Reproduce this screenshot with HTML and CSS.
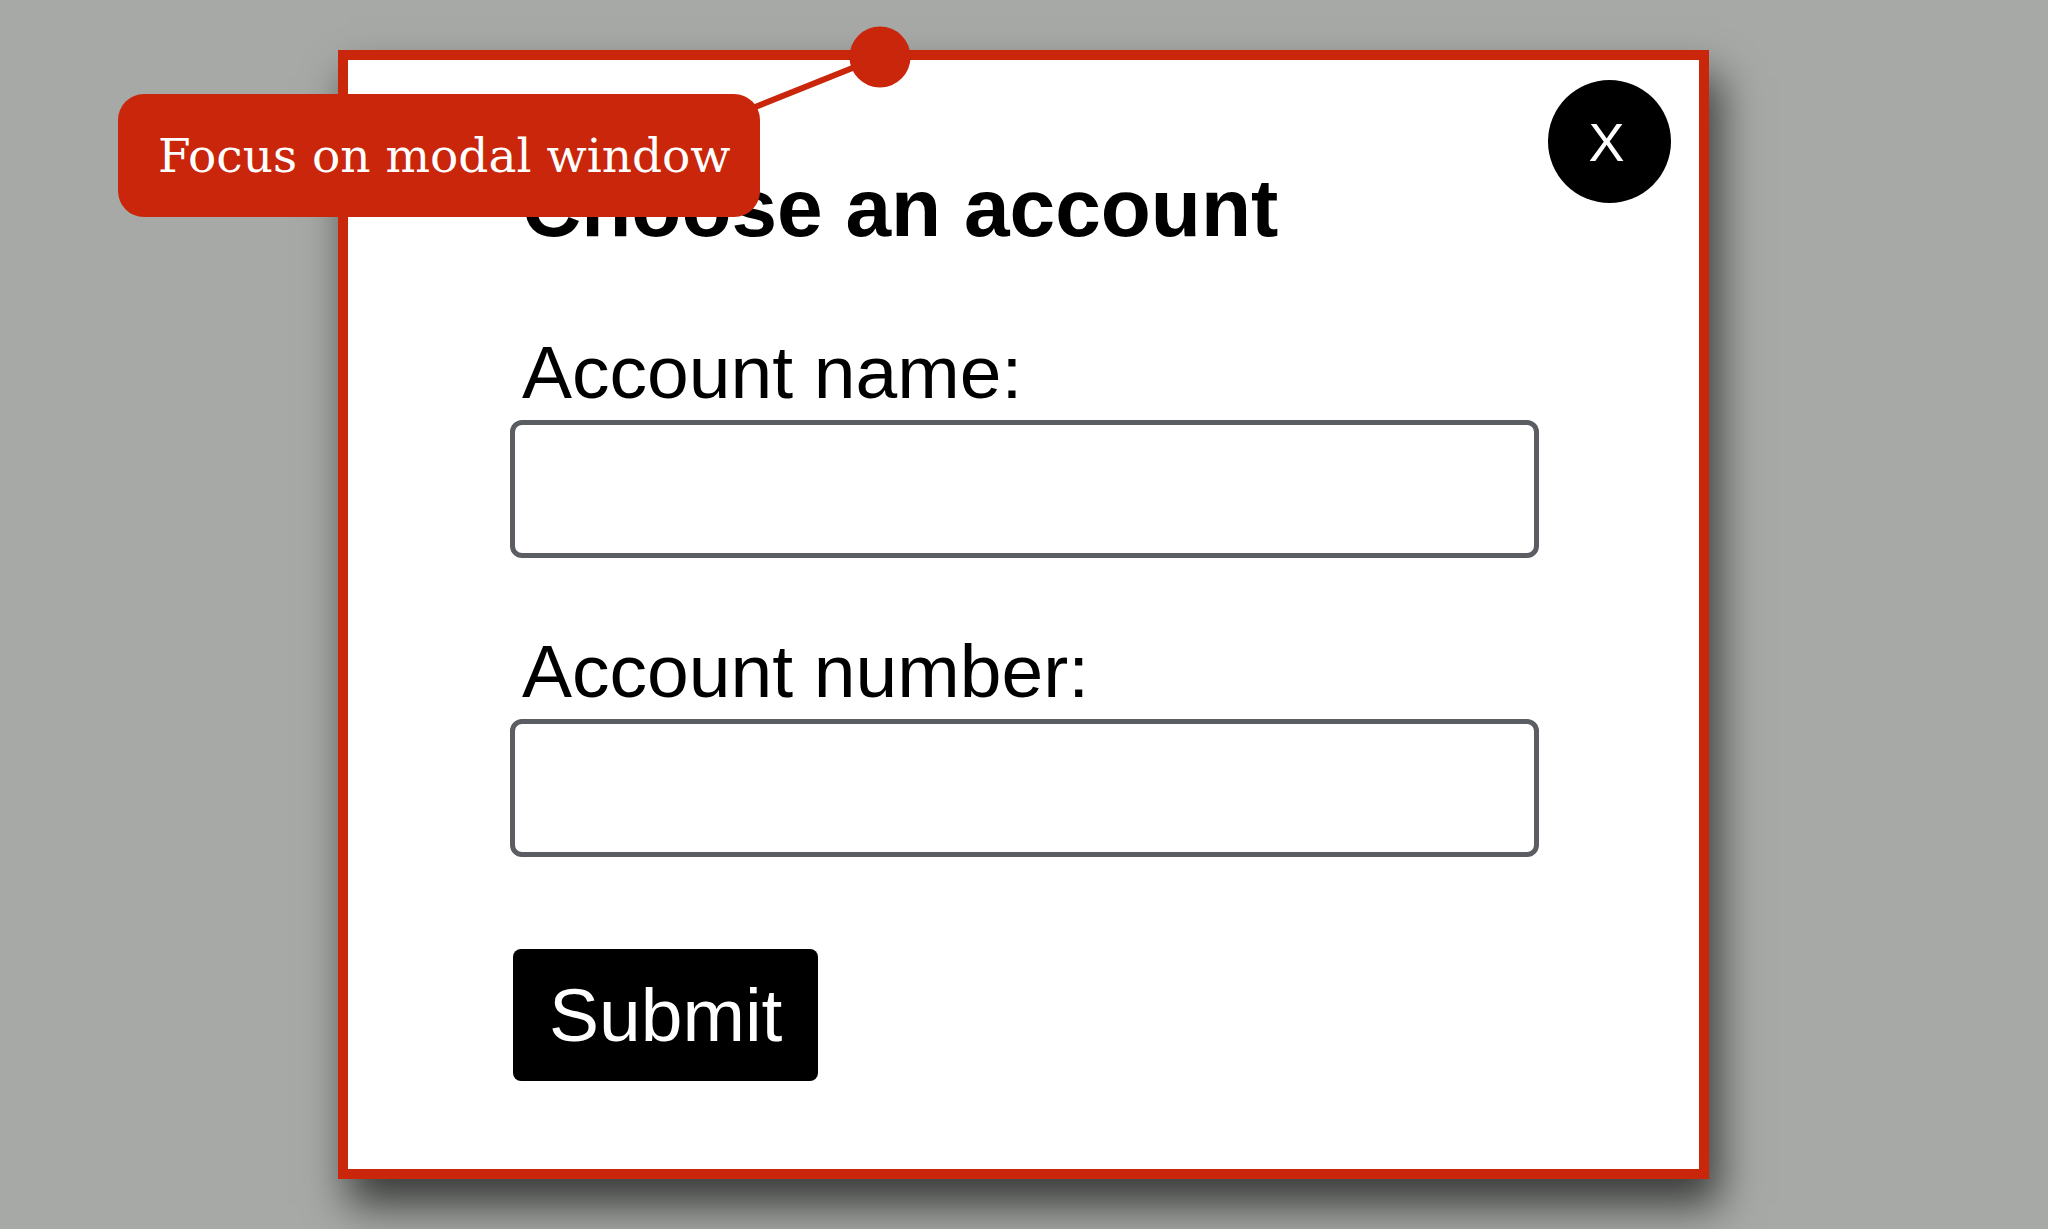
FILE: index.html
```html
<!DOCTYPE html>
<html lang="en">
<head>
<meta charset="utf-8">
<title>Choose an account</title>
<link rel="stylesheet" href="styles.css">
</head>
<body>
  <div class="modal" role="dialog" aria-labelledby="modal-title">
    <button class="close" type="button" aria-label="Close">X</button>
    <form class="form">
      <h2 class="title" id="modal-title">Choose an account</h2>
      <div class="field">
        <label class="label" for="acc-name">Account name:</label>
        <input class="input" id="acc-name" type="text">
      </div>
      <div class="field field-second">
        <label class="label" for="acc-number">Account number:</label>
        <input class="input" id="acc-number" type="text">
      </div>
      <button class="submit" type="button">Submit</button>
    </form>
  </div>

  <svg class="connector" width="220" height="130" viewBox="0 0 220 130" aria-hidden="true">
    <line x1="180" y1="37" x2="20" y2="101" stroke="#c9260b" stroke-width="6"/>
    <circle cx="180" cy="37" r="30.5" fill="#c9260b"/>
  </svg>
  <div class="tooltip">Focus on modal window</div>
</body>
</html>
```

FILE: styles.css
```css
html, body {
  margin: 0;
  padding: 0;
}

body {
  background: #a6a9a6;
  width: 2048px;
  height: 1229px;
  overflow: hidden;
  position: relative;
  padding: 50px 0 0 338px;
  box-sizing: border-box;
  font-family: "Liberation Sans", Arial, sans-serif;
}

.modal {
  position: relative;
  box-sizing: border-box;
  width: 1371px;
  height: 1129px;
  background: #ffffff;
  border: 10px solid #c9260b;
  box-shadow: 10px 26px 40px rgba(0, 0, 0, 0.65);
  padding: 107px 0 0 162px;
}

.close {
  position: absolute;
  top: 20px;
  right: 28px;
  width: 123px;
  height: 123px;
  border-radius: 50%;
  border: none;
  background: #000000;
  color: #ffffff;
  font-family: "Liberation Sans", Arial, sans-serif;
  font-size: 54px;
  line-height: 1;
  padding: 0 6px 0 0;
  display: flex;
  align-items: center;
  justify-content: center;
}

.form {
  display: flex;
  flex-direction: column;
  align-items: flex-start;
}

.title {
  margin: 0;
  padding-left: 12px;
  font-size: 82px;
  line-height: 82px;
  font-weight: bold;
  color: #000;
}

.field {
  display: flex;
  flex-direction: column;
  gap: 10px;
  margin-top: 86px;
}

.field-second {
  margin-top: 76px;
}

.label {
  display: block;
  padding-left: 12px;
  font-size: 75px;
  line-height: 75px;
  color: #000;
}

.input {
  box-sizing: border-box;
  width: 1029px;
  height: 138px;
  margin: 0;
  border: 5px solid #5a5d61;
  border-radius: 12px;
  background: #ffffff;
  font-size: 40px;
}

.submit {
  margin: 92px 0 0 3px;
  height: 132px;
  padding: 0 36px;
  border: none;
  border-radius: 8px;
  background: #000000;
  color: #ffffff;
  font-family: "Liberation Sans", Arial, sans-serif;
  font-size: 75px;
  line-height: 1;
}

.connector {
  position: absolute;
  left: 700px;
  top: 20px;
}

.tooltip {
  position: absolute;
  left: 118px;
  top: 94px;
  width: 642px;
  height: 123px;
  box-sizing: border-box;
  padding-left: 40px;
  display: flex;
  align-items: center;
  background: #c9260b;
  border-radius: 26px;
  color: #ffffff;
  font-family: "DejaVu Serif", "Liberation Serif", serif;
  font-size: 47px;
  white-space: nowrap;
}
```
